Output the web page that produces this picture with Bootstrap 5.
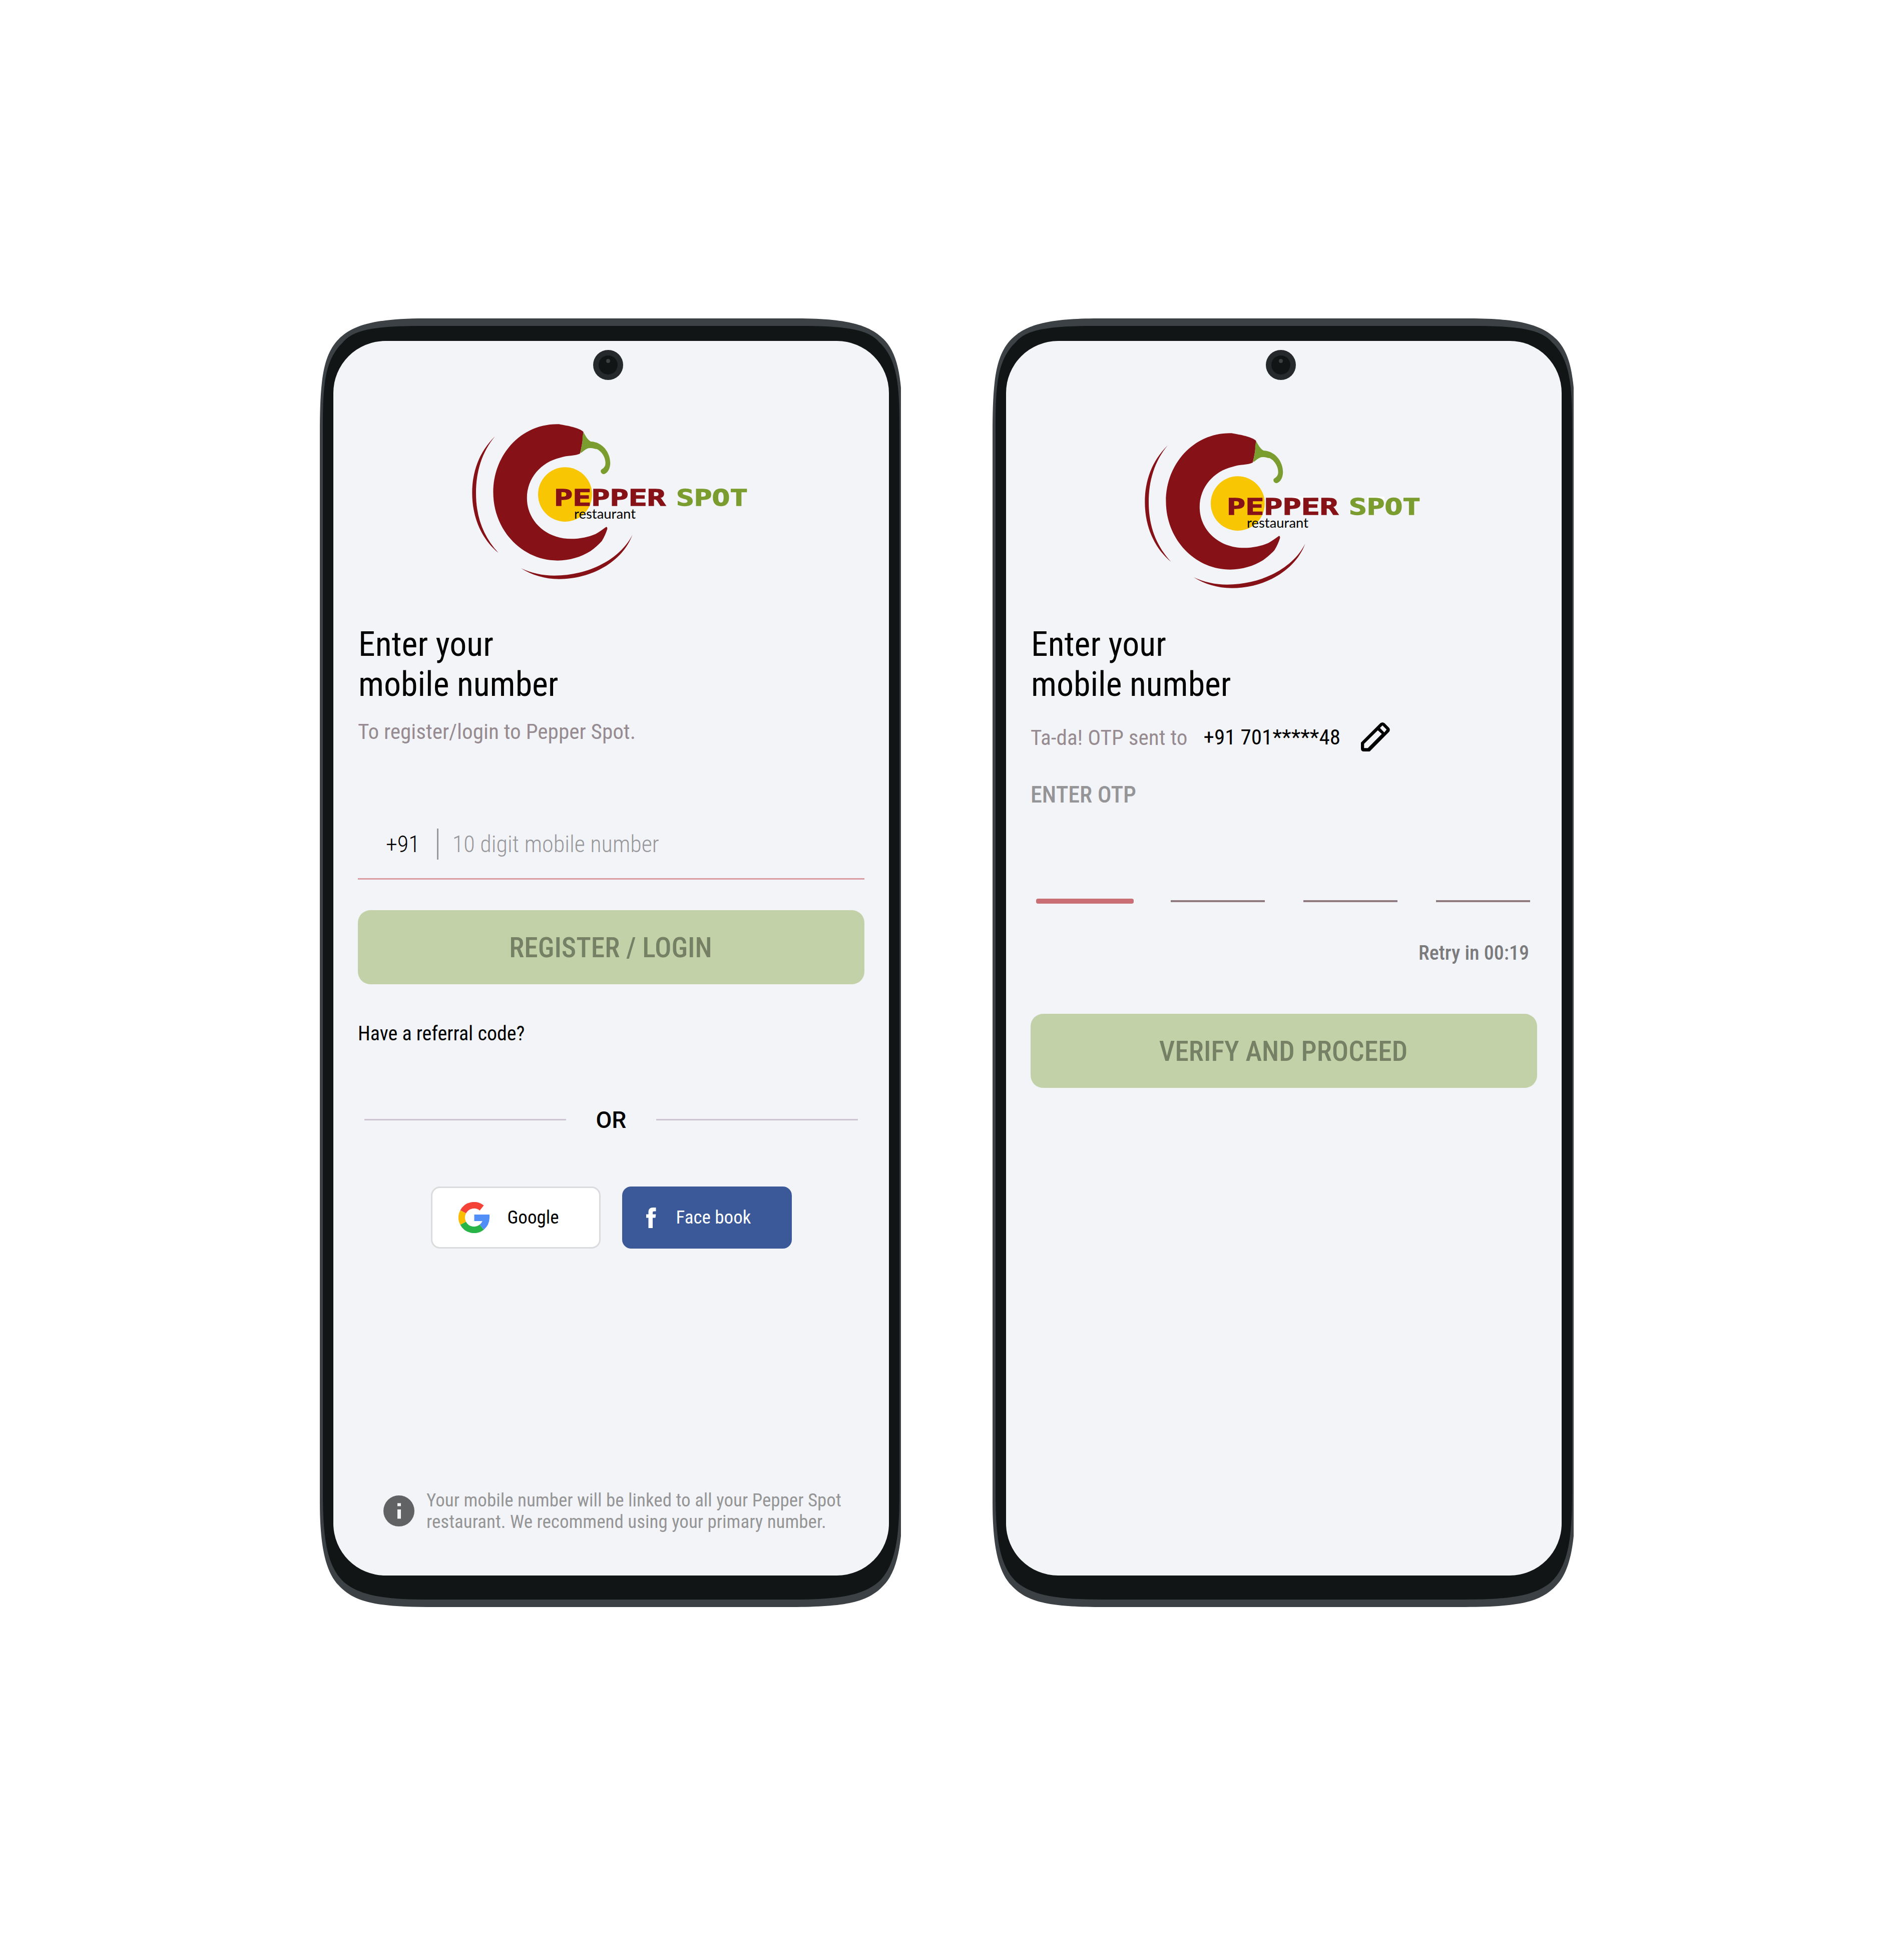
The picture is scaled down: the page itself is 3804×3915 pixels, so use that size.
<!DOCTYPE html>
<html lang="en">
<head>
<meta charset="utf-8">
<meta name="viewport" content="width=device-width, initial-scale=1">
<title>Pepper Spot – Login</title>
<link href="https://cdn.jsdelivr.net/npm/bootstrap@5.3.0/dist/css/bootstrap.min.css" rel="stylesheet">
<style>
body{background:#fff;font-family:"Roboto Condensed",Roboto,"Liberation Sans Narrow",sans-serif;font-stretch:75%;font-weight:400;color:#000}
.stage{padding:636px 0 0 639px;gap:183px;height:3915px}
.phone{width:1161px;height:2574px;padding:45px 24px 63px 27px;overflow:hidden}
.phone-body{left:0;top:0;z-index:0}
.phone-screen{z-index:1;background:#f3f4f8;border-radius:104px;padding:0 49px}
.camera{left:518px;top:17px}
.logo{margin-left:205px;margin-top:139px}
.logo-b{margin-top:157px}
.headline{font-size:67.8px;line-height:80px;font-weight:400;margin:67px 0 0;padding-left:1px}
.headline-b{margin-top:49px}
.sub{font-size:43.2px;line-height:50px;color:#968b90}
.sub-a{margin-top:30px}
.phone-row{margin-top:168px;height:102px;padding:0 0 37px 56px;border-bottom:3px solid #d99ca3;font-size:46.25px;line-height:62px;font-weight:300}
.v-sep{width:3px;height:62px;background:#98989b;margin:0 28px 0 34px}
.ph{color:#98989b}
.btn-main{height:148px;border-radius:25px;background:#c2d1a8;color:#768065;font-size:55.5px;font-weight:500;line-height:65px;border:0;padding:3px 2px 0 0}
.btn-main:disabled{background:#c2d1a8;color:#768065;opacity:1}
.mt-a{margin-top:61px}.mt-b{margin-top:98px}
.referral{font-size:40px;line-height:47px;margin-top:75px}
.or-row{margin:122px 13px 0 13px;font-family:Roboto,sans-serif;font-stretch:100%;font-size:46.25px;line-height:54px;font-weight:500}
.or-rule{height:3px;background:#cdc5d1;width:403px;margin-top:-1px}
.social{margin-top:106px;gap:43px}
.btn-soc{width:339px;height:124px;border-radius:18px;font-size:37px;line-height:43px;border:0;padding:0}
.btn-g{background:#fff;border:3px solid #dadbdc;padding-left:52px;color:#000}
.btn-f{background:#3b5998;color:#fff;padding-left:48px}
.btn-g span{margin:-1px 0 0 36px}.btn-f span{margin:-1px 0 0 39px}
.note{margin-top:481px;padding-left:51px;font-size:37px;line-height:43.4px;color:#959596}
.note svg{margin:12px 24px 0 0}
.sent{margin-top:35px;height:60px}
.sent-text{padding-top:3px}
.sent-num{color:#000;font-size:43.2px;margin-left:32px;padding-top:3px}
.sent svg{margin-left:41px}
.otp-label{font-size:46.25px;line-height:54px;font-weight:500;color:#959597;margin-top:58px}
.otp-row{margin:181px 14px 0 11px;height:10px;gap:77px}
.otp-on{width:195px;height:10px;border-radius:4px;background:#c96e74;margin-right:-3px}
.otp-off{width:188px;height:4px;background:#8f7b7f}
.retry{font-size:40px;line-height:47px;font-weight:500;color:#7b7b7d;margin-top:75px;padding-right:16px}
</style>
</head>
<body>
<svg width="0" height="0" class="position-absolute" aria-hidden="true">
  <symbol id="frame" viewBox="639 636 1164 2574">
    <path fill="#3b4144" d="M639 870C639 770 643 711 677 677C702 653 738 636 850 636H1592C1704 636 1740 653 1765 677C1799 711 1803 770 1803 870V3000C1803 3075 1795 3137 1765 3167C1732 3203 1682 3210 1572 3210H870C760 3210 710 3203 677 3167C647 3137 639 3075 639 3000Z"/>
    <path fill="#111515" d="M645 860C645 775 647 720 685 684C704 661 740 651 840 651H1602C1702 651 1738 661 1757 684C1795 720 1797 775 1797 860V2980C1797 3060 1792 3126 1755 3160C1722 3188 1672 3195 1582 3195H860C770 3195 720 3188 687 3160C650 3126 645 3060 645 2980Z"/>
  </symbol>
  <symbol id="cam" viewBox="0 0 62 62">
    <circle cx="31" cy="31" r="30" fill="#25292b"/><circle cx="31" cy="31" r="19" fill="#111515"/><circle cx="31" cy="23" r="4" fill="#3b4144"/>
  </symbol>
  <symbol id="brand" viewBox="0 0 1568 1080" preserveAspectRatio="none">
    <g fill="#861217">
      <path d="M180 155C95 250 61 370 61 495C61 640 110 770 198 853C120 755 81 640 81 495C81 370 110 250 180 155Z"/>
      <path d="M316 945C370 985 440 1010 515 1010C680 1010 845 910 898 744C835 890 670 989 490 989C430 989 370 975 316 945Z"/>
      <path d="M515 82C560 92 620 103 642 128C640 170 634 215 624 258C600 273 555 268 520 283C420 310 347 405 347 525C347 660 445 769 578 769C625 769 670 757 705 740C725 728 742 712 760 698C765 697 768 702 766 712C760 735 750 760 738 782C720 805 700 825 678 843C630 877 570 899 507 899C320 899 171 716 171 490C171 262 320 75 515 82Z"/>
    </g>
    <path fill="#7b9d30" d="M643 131C652 150 663 175 681 186C740 188 782 250 782 315C782 345 770 374 752 380C738 384 730 370 733 358C738 348 757 345 757 315C757 280 737 245 712 231C700 230 690 223 675 225C655 226 645 243 626 256C628 230 638 200 637 160C638 145 640 138 643 131Z"/>
    <ellipse cx="546" cy="503" rx="141" ry="163" fill="#f9c604"/>
  </symbol>
</svg>

<main class="stage d-flex align-items-start">
  <section class="phone position-relative flex-shrink-0">
    <svg class="phone-body position-absolute" width="1164" height="2574"><use href="#frame"/></svg>
    <div class="phone-screen position-relative d-flex flex-column h-100">
      <svg class="camera position-absolute" width="62" height="62"><use href="#cam"/></svg>
      <svg class="logo flex-shrink-0" width="600" height="360" viewBox="0 0 600 360">
        <use href="#brand" width="600" height="360"/>
        <g font-family="DejaVu Sans Mono" font-weight="700" font-size="45" font-stretch="normal" stroke-width="1.4">
          <text x="187" y="189.500" fill="#861217" stroke="#861217" textLength="223" lengthAdjust="spacingAndGlyphs">PEPPER</text>
          <text x="431" y="189.500" fill="#7b9d30" stroke="#7b9d30" textLength="143" lengthAdjust="spacingAndGlyphs">SPOT</text>
        </g>
        <text x="227" y="216" font-family="Lato" font-size="27" textLength="123" lengthAdjust="spacingAndGlyphs">restaurant</text>
      </svg>
      <h1 class="headline">Enter your<br>mobile number</h1>
      <div class="sub sub-a">To register/login to Pepper Spot.</div>
      <div class="phone-row d-flex"><span>+91</span><span class="v-sep"></span><span class="ph">10 digit mobile number</span></div>
      <button class="btn btn-main mt-a w-100" disabled>REGISTER / LOGIN</button>
      <div class="referral">Have a referral code?</div>
      <div class="or-row d-flex align-items-center justify-content-between"><span class="or-rule"></span><span>OR</span><span class="or-rule"></span></div>
      <div class="social d-flex justify-content-center">
        <button class="btn btn-soc btn-g d-flex align-items-center">
          <svg width="62" height="62" viewBox="0 0 62 62" fill="none" stroke-width="13"><path stroke="#f44336" d="M46.500 11.900A24.500 24.500 0 0 0 9.300 19.600"/><path stroke="#fbbc04" d="M9.300 19.600A24.500 24.500 0 0 0 9.300 42.400"/><path stroke="#28b446" d="M9.300 42.400A24.500 24.500 0 0 0 46.500 50.100"/><path stroke="#518ef8" d="M46.500 50.100A24.500 24.500 0 0 0 55.500 31.500H31.500"/></svg>
          <span>Google</span></button>
        <button class="btn btn-soc btn-f d-flex align-items-center">
          <svg width="21" height="41" viewBox="0 0 21 41" fill="#fff"><path d="M19.500 0V7.500H15.500C13.500 7.500 13 8.500 13 10V13.500H19.500L18.500 20.500H13V41H4.500V20.500H0V13.500H4.500V9C4.500 3 8 0 13.500 0Z"/></svg>
          <span>Face book</span></button>
      </div>
      <div class="note d-flex align-items-start">
        <svg class="flex-shrink-0" width="62" height="62" viewBox="0 0 62 62"><circle cx="31" cy="31" r="31" fill="#616264"/><path fill="#f3f4f8" d="M28 15.500h7v6h-7zM28 28h7v18.500h-7z"/></svg>
        <div>Your mobile number will be linked to all your Pepper Spot<br>restaurant. We recommend using your primary number.</div>
      </div>
    </div>
  </section>

  <section class="phone position-relative flex-shrink-0">
    <svg class="phone-body position-absolute" width="1164" height="2574"><use href="#frame"/></svg>
    <div class="phone-screen position-relative d-flex flex-column h-100">
      <svg class="camera position-absolute" width="62" height="62"><use href="#cam"/></svg>
      <svg class="logo logo-b flex-shrink-0" width="600" height="360" viewBox="0 0 600 360">
        <path fill="#fff" d="M319 154H357L346 166H319ZM467 154H502V166H467Z"/>
        <use href="#brand" width="600" height="360"/>
        <g font-family="DejaVu Sans Mono" font-weight="700" font-size="45" font-stretch="normal" stroke-width="1.4">
          <text x="187" y="189.500" fill="#861217" stroke="#861217" textLength="223" lengthAdjust="spacingAndGlyphs">PEPPER</text>
          <text x="431" y="189.500" fill="#7b9d30" stroke="#7b9d30" textLength="143" lengthAdjust="spacingAndGlyphs">SPOT</text>
        </g>
        <text x="227" y="216" font-family="Lato" font-size="27" textLength="123" lengthAdjust="spacingAndGlyphs">restaurant</text>
      </svg>
      <h1 class="headline headline-b">Enter your<br>mobile number</h1>
      <div class="sent d-flex align-items-center"><span class="sub sent-text">Ta-da! OTP sent to</span><span class="sent-num">+91 701*****48</span>
        <svg width="58" height="58" viewBox="0 0 58 58"><path fill-rule="evenodd" d="M0 40.300L38.800 1.600Q43-1.500 47.200 1.600L56.500 11Q59 14.500 56.500 18.500L17.500 58H6Q0 58 0 52ZM6.300 42.700V51.300H13.700L41.700 23L33.700 15.700ZM43 6L51.300 14.300L46.700 20L38 11Z"/></svg>
      </div>
      <div class="otp-label">ENTER OTP</div>
      <div class="otp-row d-flex align-items-center"><span class="otp-on"></span><span class="otp-off"></span><span class="otp-off"></span><span class="otp-off"></span></div>
      <div class="retry text-end">Retry in 00:19</div>
      <button class="btn btn-main mt-b w-100" disabled>VERIFY AND PROCEED</button>
    </div>
  </section>
</main>
<script src="https://cdn.jsdelivr.net/npm/bootstrap@5.3.0/dist/js/bootstrap.bundle.min.js"></script>
</body>
</html>
